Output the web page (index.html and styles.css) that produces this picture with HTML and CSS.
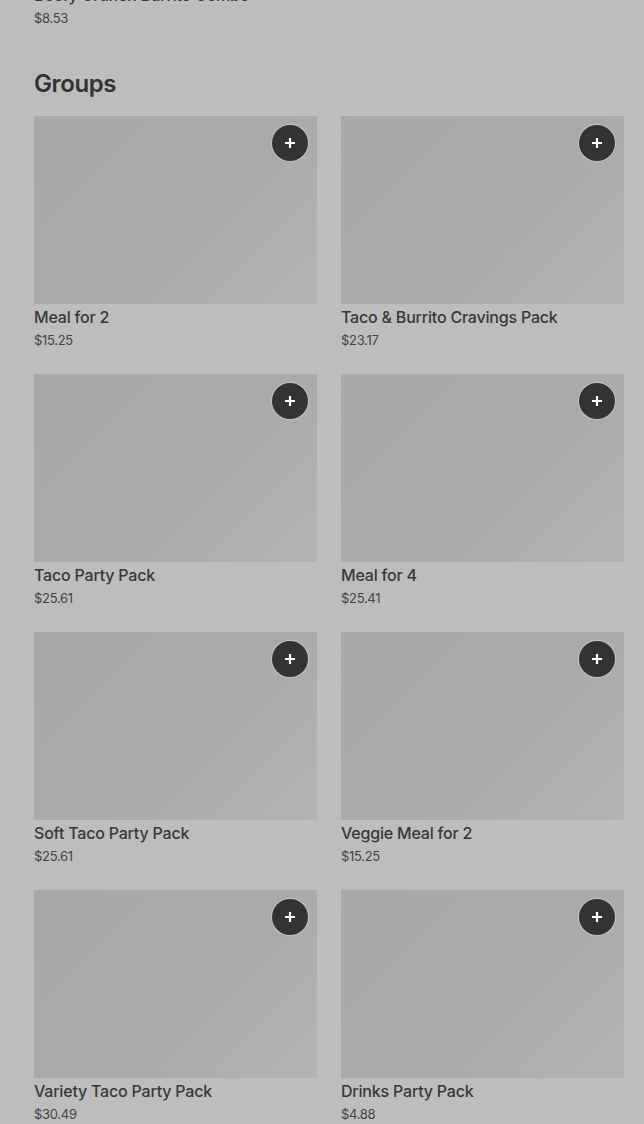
FILE: index.html
```html
<!DOCTYPE html>
<html>
<head>
  <title>Groups</title>
  <link rel="stylesheet" href="styles.css">
</head>
<body>
  <div class="page">
    <div class="prev-item">
      <div class="item-title">Beefy Crunch Burrito Combo</div>
      <div class="item-price">$8.53</div>
    </div>

    <h2 class="section-title">Groups</h2>

    <div class="grid">
      <div class="card">
        <div class="card-img">
          <button class="add-btn"><svg viewBox="0 0 12 12" width="12" height="12"><path d="M6 1v10M1 6h10" stroke="#fff" stroke-width="2.2"/></svg></button>
        </div>
        <div class="item-title">Meal for 2</div>
        <div class="item-price">$15.25</div>
      </div>
      <div class="card">
        <div class="card-img">
          <button class="add-btn"><svg viewBox="0 0 12 12" width="12" height="12"><path d="M6 1v10M1 6h10" stroke="#fff" stroke-width="2.2"/></svg></button>
        </div>
        <div class="item-title">Taco &amp; Burrito Cravings Pack</div>
        <div class="item-price">$23.17</div>
      </div>
      <div class="card">
        <div class="card-img">
          <button class="add-btn"><svg viewBox="0 0 12 12" width="12" height="12"><path d="M6 1v10M1 6h10" stroke="#fff" stroke-width="2.2"/></svg></button>
        </div>
        <div class="item-title">Taco Party Pack</div>
        <div class="item-price">$25.61</div>
      </div>
      <div class="card">
        <div class="card-img">
          <button class="add-btn"><svg viewBox="0 0 12 12" width="12" height="12"><path d="M6 1v10M1 6h10" stroke="#fff" stroke-width="2.2"/></svg></button>
        </div>
        <div class="item-title">Meal for 4</div>
        <div class="item-price">$25.41</div>
      </div>
      <div class="card">
        <div class="card-img">
          <button class="add-btn"><svg viewBox="0 0 12 12" width="12" height="12"><path d="M6 1v10M1 6h10" stroke="#fff" stroke-width="2.2"/></svg></button>
        </div>
        <div class="item-title">Soft Taco Party Pack</div>
        <div class="item-price">$25.61</div>
      </div>
      <div class="card">
        <div class="card-img">
          <button class="add-btn"><svg viewBox="0 0 12 12" width="12" height="12"><path d="M6 1v10M1 6h10" stroke="#fff" stroke-width="2.2"/></svg></button>
        </div>
        <div class="item-title">Veggie Meal for 2</div>
        <div class="item-price">$15.25</div>
      </div>
      <div class="card">
        <div class="card-img">
          <button class="add-btn"><svg viewBox="0 0 12 12" width="12" height="12"><path d="M6 1v10M1 6h10" stroke="#fff" stroke-width="2.2"/></svg></button>
        </div>
        <div class="item-title">Variety Taco Party Pack</div>
        <div class="item-price">$30.49</div>
      </div>
      <div class="card">
        <div class="card-img">
          <button class="add-btn"><svg viewBox="0 0 12 12" width="12" height="12"><path d="M6 1v10M1 6h10" stroke="#fff" stroke-width="2.2"/></svg></button>
        </div>
        <div class="item-title">Drinks Party Pack</div>
        <div class="item-price">$4.88</div>
      </div>
    </div>
  </div>
</body>
</html>
```

FILE: styles.css
```css
body {
  margin: 0;
  padding: 0;
  background-color: #bdbdbd;
  font-family: Inter, "Noto Sans", sans-serif;
  color: #3a3a3a;
  overflow: hidden;
}

.page {
  padding: 0 20px 0 34px;
  margin-top: -18px;
}

.prev-item {
  margin-bottom: 40px;
}

.section-title {
  margin: 0 0 15px;
  font-size: 24px;
  font-weight: 600;
  letter-spacing: -0.4px;
  line-height: 34px;
  color: #333;
}

.grid {
  display: grid;
  grid-template-columns: 283px 283px;
  column-gap: 24px;
  row-gap: 25px;
}

.card-img {
  position: relative;
  height: 188px;
  background: linear-gradient(135deg, #a9a9a9 0%, #aaaaaa 55%, #b3b3b3 100%);
}

.add-btn {
  position: absolute;
  top: 9px;
  right: 9px;
  width: 36px;
  height: 36px;
  border-radius: 50%;
  border: none;
  background-color: #333;
  box-shadow: 0 0 0 1px rgba(220, 220, 220, 0.5);
  display: flex;
  align-items: center;
  justify-content: center;
  padding: 0;
  cursor: pointer;
}

.item-title {
  font-size: 16px;
  font-weight: 500;
  letter-spacing: -0.2px;
  line-height: 22px;
  margin-top: 2px;
  color: #383838;
}

.item-price {
  font-size: 13px;
  letter-spacing: -0.3px;
  line-height: 18px;
  margin-top: 3px;
  color: #444;
}
```
